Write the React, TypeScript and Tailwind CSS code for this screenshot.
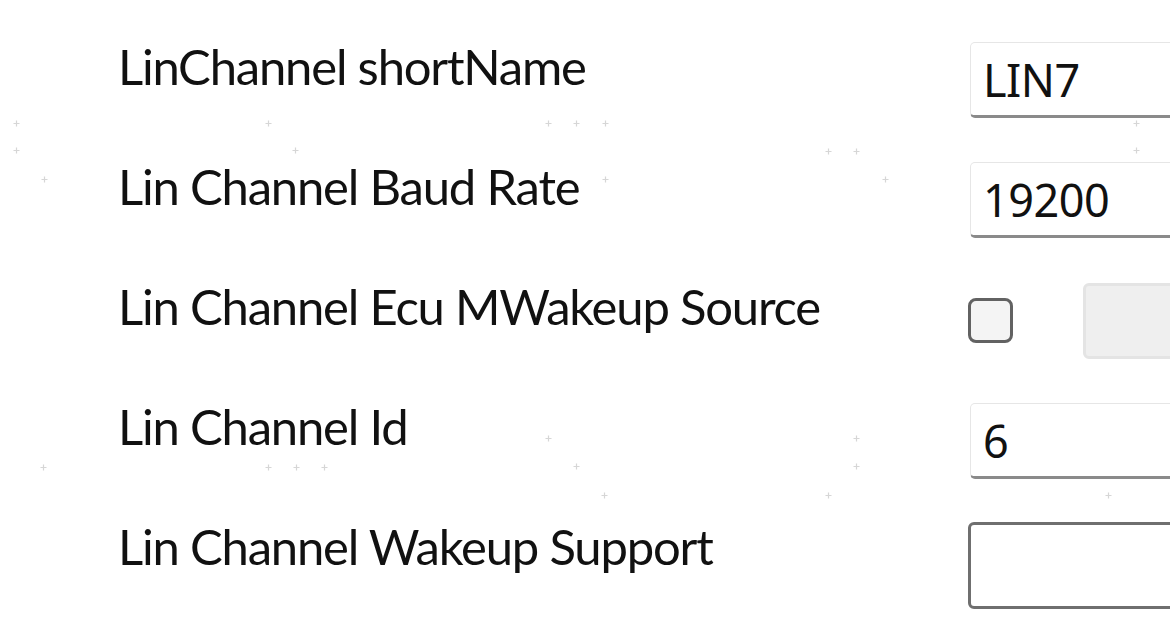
import React from "react";

const plusMarks: [number, number][] = [
  [16, 123], [16, 150], [44, 179], [268, 123], [295, 150],
  [548, 123], [576, 123], [605, 123], [828, 151], [856, 151], [605, 179], [885, 179],
  [1136, 123], [1136, 150], [1164, 179],
  [43, 467], [268, 467], [296, 467], [324, 467],
  [548, 438], [576, 466], [604, 495], [856, 438], [856, 466], [828, 495],
  [1108, 438], [1136, 466], [1108, 495],
];

function Plus({ x, y }: { x: number; y: number }) {
  return (
    <svg
      className="absolute"
      style={{ left: x - 4, top: y - 4 }}
      width="9"
      height="9"
      viewBox="0 0 9 9"
    >
      <path d="M4.5 1.5v6M1.5 4.5h6" stroke="#d6d6d6" strokeWidth="1.2" />
    </svg>
  );
}

const labelCls =
  "w-[852px] shrink-0 font-['Lato',sans-serif] text-[49px] leading-[50px] tracking-[-1.2px] text-[#111111] mt-[-1px] whitespace-nowrap";

function TextBox({ value }: { value: string }) {
  return (
    <div className="h-[76px] w-[260px] shrink-0 rounded-[5px] border border-[#e6e6e6] border-b-[3px] border-b-[#8a8a8a] bg-white pl-[12px] pt-[14px] font-['Noto_Sans',sans-serif] text-[45px] leading-[45px] tracking-[-0.5px] text-[#111111]">
      {value}
    </div>
  );
}

export default function App() {
  return (
    <div className="relative h-[630px] w-[1170px] overflow-hidden bg-white">
      <div className="pointer-events-none absolute inset-0">
        {plusMarks.map(([x, y], i) => (
          <Plus key={i} x={x} y={y} />
        ))}
      </div>
      <div className="relative flex flex-col pl-[118px] pt-[42px]">
        <div className="flex h-[120px]">
          <div className={labelCls}>LinChannel shortName</div>
          <TextBox value="LIN7" />
        </div>
        <div className="flex h-[120px]">
          <div className={labelCls}>Lin Channel Baud Rate</div>
          <TextBox value="19200" />
        </div>
        <div className="flex h-[120px]">
          <div className={labelCls}>Lin Channel Ecu MWakeup Source</div>
          <div className="flex shrink-0 items-start gap-[70px]">
            <div className="ml-[-2px] mt-[16px] h-[45px] w-[45px] rounded-[8px] border-[3px] border-[#626262] bg-[#f4f4f4]" />
            <div className="mt-[1px] h-[76px] w-[200px] rounded-[6px] border-[3px] border-[#e4e4e4] bg-[#efefef]" />
          </div>
        </div>
        <div className="flex h-[120px]">
          <div className={labelCls}>Lin Channel Id</div>
          <div className="mt-[1px]">
            <TextBox value="6" />
          </div>
        </div>
        <div className="flex h-[120px]">
          <div className={labelCls}>Lin Channel Wakeup Support</div>
          <div className="ml-[-2px] h-[87px] w-[260px] shrink-0 rounded-[6px] border-[3px] border-[#6f6f6f] bg-white" />
        </div>
      </div>
    </div>
  );
}
